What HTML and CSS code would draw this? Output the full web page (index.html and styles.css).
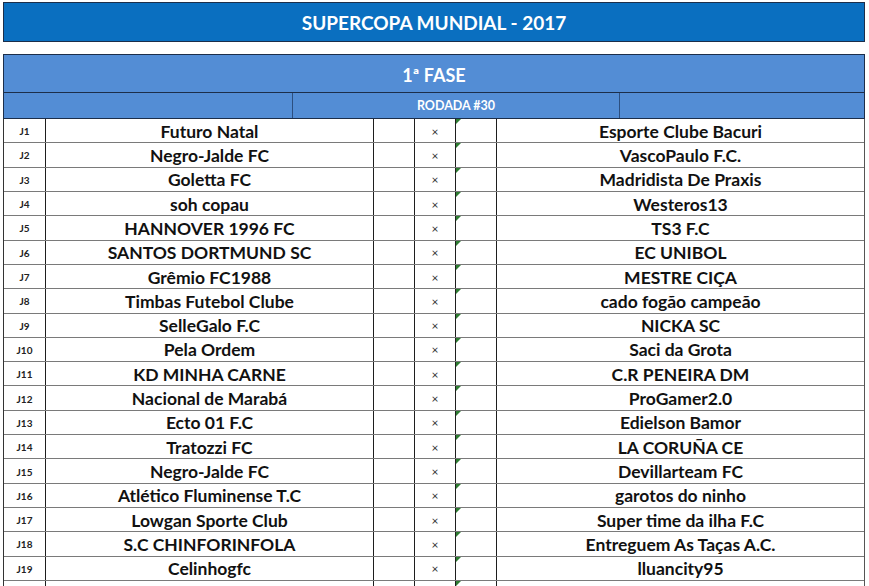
FILE: index.html
```html
<!DOCTYPE html>
<html lang="pt">
<head>
<meta charset="utf-8">
<title>Supercopa Mundial - 2017</title>
<link rel="stylesheet" href="styles.css">
</head>
<body>
<div class="sheet">
  <div class="title">SUPERCOPA MUNDIAL - 2017</div>
  <div class="phase">
    <div class="phase-name">1ª FASE</div>
    <div class="round">
      <div class="round-cell"></div>
      <div class="round-cell round-label">RODADA #30</div>
      <div class="round-cell"></div>
    </div>
  </div>
  <div class="games">
    <div class="row"><div class="c id">J1</div><div class="c team">Futuro Natal</div><div class="c score"></div><div class="c vs">×</div><div class="c score flag"></div><div class="c team">Esporte Clube Bacuri</div></div>
    <div class="row"><div class="c id">J2</div><div class="c team">Negro-Jalde FC</div><div class="c score"></div><div class="c vs">×</div><div class="c score flag"></div><div class="c team">VascoPaulo F.C.</div></div>
    <div class="row"><div class="c id">J3</div><div class="c team">Goletta FC</div><div class="c score"></div><div class="c vs">×</div><div class="c score flag"></div><div class="c team">Madridista De Praxis</div></div>
    <div class="row"><div class="c id">J4</div><div class="c team">soh copau</div><div class="c score"></div><div class="c vs">×</div><div class="c score flag"></div><div class="c team">Westeros13</div></div>
    <div class="row"><div class="c id">J5</div><div class="c team">HANNOVER 1996 FC</div><div class="c score"></div><div class="c vs">×</div><div class="c score flag"></div><div class="c team">TS3 F.C</div></div>
    <div class="row"><div class="c id">J6</div><div class="c team">SANTOS DORTMUND SC</div><div class="c score"></div><div class="c vs">×</div><div class="c score flag"></div><div class="c team">EC UNIBOL</div></div>
    <div class="row"><div class="c id">J7</div><div class="c team">Grêmio FC1988</div><div class="c score"></div><div class="c vs">×</div><div class="c score flag"></div><div class="c team">MESTRE CIÇA</div></div>
    <div class="row"><div class="c id">J8</div><div class="c team">Timbas Futebol Clube</div><div class="c score"></div><div class="c vs">×</div><div class="c score flag"></div><div class="c team">cado fogão campeão</div></div>
    <div class="row"><div class="c id">J9</div><div class="c team">SelleGalo F.C</div><div class="c score"></div><div class="c vs">×</div><div class="c score flag"></div><div class="c team">NICKA SC</div></div>
    <div class="row"><div class="c id">J10</div><div class="c team">Pela Ordem</div><div class="c score"></div><div class="c vs">×</div><div class="c score flag"></div><div class="c team">Saci da Grota</div></div>
    <div class="row"><div class="c id">J11</div><div class="c team">KD MINHA CARNE</div><div class="c score"></div><div class="c vs">×</div><div class="c score flag"></div><div class="c team">C.R PENEIRA DM</div></div>
    <div class="row"><div class="c id">J12</div><div class="c team">Nacional de Marabá</div><div class="c score"></div><div class="c vs">×</div><div class="c score flag"></div><div class="c team">ProGamer2.0</div></div>
    <div class="row"><div class="c id">J13</div><div class="c team">Ecto 01 F.C</div><div class="c score"></div><div class="c vs">×</div><div class="c score flag"></div><div class="c team">Edielson Bamor</div></div>
    <div class="row"><div class="c id">J14</div><div class="c team">Tratozzi FC</div><div class="c score"></div><div class="c vs">×</div><div class="c score flag"></div><div class="c team">LA CORUÑA CE</div></div>
    <div class="row"><div class="c id">J15</div><div class="c team">Negro-Jalde FC</div><div class="c score"></div><div class="c vs">×</div><div class="c score flag"></div><div class="c team">Devillarteam FC</div></div>
    <div class="row"><div class="c id">J16</div><div class="c team">Atlético Fluminense T.C</div><div class="c score"></div><div class="c vs">×</div><div class="c score flag"></div><div class="c team">garotos do ninho</div></div>
    <div class="row"><div class="c id">J17</div><div class="c team">Lowgan Sporte Club</div><div class="c score"></div><div class="c vs">×</div><div class="c score flag"></div><div class="c team">Super time da ilha F.C</div></div>
    <div class="row"><div class="c id">J18</div><div class="c team">S.C CHINFORINFOLA</div><div class="c score"></div><div class="c vs">×</div><div class="c score flag"></div><div class="c team">Entreguem As Taças A.C.</div></div>
    <div class="row"><div class="c id">J19</div><div class="c team">Celinhogfc</div><div class="c score"></div><div class="c vs">×</div><div class="c score flag"></div><div class="c team">lluancity95</div></div>
    <div class="row"><div class="c id"></div><div class="c team"></div><div class="c score"></div><div class="c vs"></div><div class="c score flag"></div><div class="c team"></div></div>
  </div>
</div>
</body>
</html>
```
FILE: styles.css
```css
html, body {
  margin: 0;
  padding: 0;
  background: #ffffff;
}

body {
  font-family: Lato, "Open Sans", "Liberation Sans", sans-serif;
  overflow: hidden;
}

.sheet {
  width: 862px;
  padding: 2px 0 0 3px;
}

.title {
  height: 40px;
  box-sizing: border-box;
  background: #0a6fc0;
  border: 1px solid #1c2e4a;
  color: #ffffff;
  font-weight: 700;
  font-size: 19px;
  display: flex;
  align-items: center;
  justify-content: center;
}

.phase {
  margin-top: 12px;
  background: #538dd5;
  border: 1px solid #1c2e4a;
  border-bottom: none;
  color: #ffffff;
  font-weight: 700;
}

.phase-name {
  height: 38px;
  box-sizing: border-box;
  border-bottom: 1px solid #1c2e4a;
  display: flex;
  align-items: center;
  justify-content: center;
  font-size: 18px;
  padding-top: 2px;
}

.round {
  display: grid;
  grid-template-columns: 288px 327px 1fr;
  height: 26px;
  box-sizing: border-box;
  border-bottom: 1px solid #1c2e4a;
}

.round-cell + .round-cell {
  border-left: 1px solid #2c4f80;
}

.round-label {
  display: flex;
  align-items: center;
  justify-content: center;
  font-size: 12.5px;
}

.games {
  border-left: 1px solid #333333;
  border-right: 1px solid #555555;
}

.row {
  display: grid;
  grid-template-columns: 41px 328px 41px 41px 41px 1fr;
  height: 24.32px;
  box-sizing: border-box;
  border-bottom: 1px solid #7a7a7a;
}

.c {
  display: flex;
  align-items: center;
  justify-content: center;
  position: relative;
  color: #111111;
  font-weight: 700;
  padding-top: 1px;
}

.c + .c {
  border-left: 1px solid #1e1e1e;
}

.id {
  font-size: 10px;
  color: #222222;
}

.team {
  font-size: 17.5px;
}

.vs {
  font-size: 12px;
  font-weight: 400;
  color: #333333;
}

.flag::before {
  content: "";
  position: absolute;
  left: 0;
  top: 0;
  width: 0;
  height: 0;
  border-top: 5px solid #2e7d32;
  border-right: 5px solid transparent;
}
```
